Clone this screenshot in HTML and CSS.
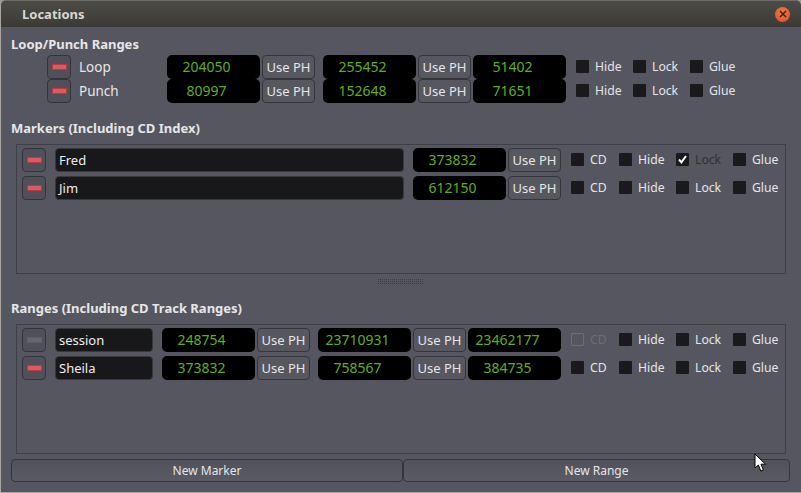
FILE: index.html
```html
<!DOCTYPE html>
<html lang="en">
  <head>
    <meta charset="UTF-8" />
    <title>Locations</title>
    <link rel="stylesheet" href="styles.css">
  </head>
  <body>
    <div class="window">
      <header class="titlebar">
        <span class="title">Locations</span>
        <span class="close">
          <svg width="8" height="8" viewBox="0 0 8 8"><path d="M1 1 7 7M7 1 1 7" stroke="#4a1a0c" stroke-width="1.5" fill="none"/></svg>
        </span>
      </header>

      <main class="content">
        <h2 class="heading">Loop/Punch Ranges</h2>
        <div class="rows loop-rows">
          <div class="row">
            <button class="remove"><span class="dash"></span></button>
            <span class="row-label">Loop</span>
            <span class="clock">204050</span>
            <button class="use-ph">Use PH</button>
            <span class="clock clock-gap">255452</span>
            <button class="use-ph">Use PH</button>
            <span class="clock">51402</span>
            <div class="flags">
              <label class="flag"><span class="box"></span>Hide</label>
              <label class="flag"><span class="box"></span>Lock</label>
              <label class="flag"><span class="box"></span>Glue</label>
            </div>
          </div>
          <div class="row">
            <button class="remove"><span class="dash"></span></button>
            <span class="row-label">Punch</span>
            <span class="clock">80997</span>
            <button class="use-ph">Use PH</button>
            <span class="clock clock-gap">152648</span>
            <button class="use-ph">Use PH</button>
            <span class="clock">71651</span>
            <div class="flags">
              <label class="flag"><span class="box"></span>Hide</label>
              <label class="flag"><span class="box"></span>Lock</label>
              <label class="flag"><span class="box"></span>Glue</label>
            </div>
          </div>
        </div>

        <h2 class="heading markers-heading">Markers (Including CD Index)</h2>
        <section class="panel">
          <div class="row">
            <button class="remove"><span class="dash"></span></button>
            <span class="name name-wide">Fred</span>
            <span class="clock">373832</span>
            <button class="use-ph">Use PH</button>
            <div class="flags">
              <label class="flag flag-cd"><span class="box"></span>CD</label>
              <label class="flag"><span class="box"></span>Hide</label>
              <label class="flag flag-on">
                <span class="box">
                  <svg width="13" height="13" viewBox="0 0 13 13"><path d="M3 6.5 5.4 9.4 10 3" stroke="#fff" stroke-width="2" fill="none"/></svg>
                </span>Lock
              </label>
              <label class="flag"><span class="box"></span>Glue</label>
            </div>
          </div>
          <div class="row">
            <button class="remove"><span class="dash"></span></button>
            <span class="name name-wide">Jim</span>
            <span class="clock">612150</span>
            <button class="use-ph">Use PH</button>
            <div class="flags">
              <label class="flag flag-cd"><span class="box"></span>CD</label>
              <label class="flag"><span class="box"></span>Hide</label>
              <label class="flag"><span class="box"></span>Lock</label>
              <label class="flag"><span class="box"></span>Glue</label>
            </div>
          </div>
        </section>

        <div class="handle"></div>

        <h2 class="heading ranges-heading">Ranges (Including CD Track Ranges)</h2>
        <section class="panel">
          <div class="row">
            <button class="remove remove-off"><span class="dash"></span></button>
            <span class="name">session</span>
            <span class="clock">248754</span>
            <button class="use-ph">Use PH</button>
            <span class="clock clock-gap">23710931</span>
            <button class="use-ph">Use PH</button>
            <span class="clock">23462177</span>
            <div class="flags">
              <label class="flag flag-cd flag-off"><span class="box"></span>CD</label>
              <label class="flag"><span class="box"></span>Hide</label>
              <label class="flag"><span class="box"></span>Lock</label>
              <label class="flag"><span class="box"></span>Glue</label>
            </div>
          </div>
          <div class="row">
            <button class="remove"><span class="dash"></span></button>
            <span class="name">Sheila</span>
            <span class="clock">373832</span>
            <button class="use-ph">Use PH</button>
            <span class="clock clock-gap">758567</span>
            <button class="use-ph">Use PH</button>
            <span class="clock">384735</span>
            <div class="flags">
              <label class="flag flag-cd"><span class="box"></span>CD</label>
              <label class="flag"><span class="box"></span>Hide</label>
              <label class="flag"><span class="box"></span>Lock</label>
              <label class="flag"><span class="box"></span>Glue</label>
            </div>
          </div>
        </section>

        <div class="actions">
          <button class="action action-marker">New Marker</button>
          <button class="action action-range">New Range</button>
        </div>
      </main>

      <svg class="cursor" width="13" height="20" viewBox="0 0 13 20">
        <path d="M1 1V15L4.4 12 6.8 18 9.4 17 7 11.2H11.5Z" fill="#fff" stroke="#000" stroke-width="1"/>
      </svg>
    </div>
  </body>
</html>
```

FILE: styles.css
```css
* {
  margin: 0;
  padding: 0;
  box-sizing: border-box;
  font-family: "Noto Sans", sans-serif;
}

html,
body {
  width: 801px;
  height: 493px;
  overflow: hidden;
  background: #9a9892;
}

.window {
  position: relative;
  width: 801px;
  height: 493px;
  background: #55565f;
  border-left: 1px solid #a9a7a0;
  border-bottom: 1px solid #a9a7a0;
  border-radius: 6px 6px 0 0;
  color: #e6e6e8;
  font-size: 13.5px;
  overflow: hidden;
}

/* Title bar */
.titlebar {
  height: 27px;
  display: flex;
  align-items: center;
  justify-content: space-between;
  padding: 0 11px 0 21px;
  background: linear-gradient(#4c4b45, #3b3a35);
  border-top: 1px solid #6d6c66;
}

.title {
  font-size: 13px;
  font-weight: 700;
  color: #d8d6d0;
}

.close {
  width: 15px;
  height: 15px;
  display: flex;
  align-items: center;
  justify-content: center;
  border-radius: 50%;
  background: radial-gradient(circle at 50% 35%, #f27a4a, #dd4d1f);
}

/* Main area */
.content {
  padding: 0 10px;
}

.heading {
  height: 17px;
  font-size: 13px;
  line-height: 15px;
  font-weight: 700;
  color: #e6e6e8;
  white-space: nowrap;
}

.content > .heading:first-child {
  margin-top: 10px;
}

.rows {
  margin-top: 1px;
}

.loop-rows {
  padding-left: 36px;
}

.markers-heading {
  margin-top: 18px;
}

.ranges-heading {
  margin-top: 17px;
}

.panel {
  height: 130px;
  width: 770px;
  margin: 6px 0 0 5px;
  padding: 3px 5px;
  border: 1px solid #3e3f47;
}

.row {
  display: flex;
  align-items: center;
  height: 24px;
  white-space: nowrap;
}

.panel .row {
  margin-bottom: 4px;
}

.remove {
  flex: none;
  width: 24px;
  height: 24px;
  display: flex;
  align-items: center;
  justify-content: center;
  background: #4f5059;
  border: 1px solid #33343a;
  border-radius: 4px;
}

.dash {
  width: 15px;
  height: 6px;
  background: #d95c5f;
  border: 1px solid #b8393e;
}

.remove-off .dash {
  background: #65666d;
  border-color: #5d5e65;
}

.row-label {
  flex: none;
  width: 96px;
  padding-left: 8px;
}

.name {
  flex: none;
  width: 98px;
  height: 24px;
  margin: 0 9px;
  padding-left: 3px;
  line-height: 22px;
  font-size: 13px;
  color: #eee;
  background: #18181a;
  border: 1px solid #38393f;
  border-radius: 4px;
}

.name-wide {
  width: 349px;
}

.clock {
  flex: none;
  width: 93px;
  height: 24px;
  padding-right: 14px;
  text-align: center;
  line-height: 23px;
  font-size: 14px;
  color: #62ad1e;
  background: #000;
  border-radius: 5px;
}

.use-ph {
  flex: none;
  width: 53px;
  height: 24px;
  margin-left: 2px;
  font-size: 13px;
  color: #e6e6e8;
  background: #56575f;
  border: 1px solid #35363c;
  border-radius: 4px;
}

.use-ph + .clock {
  margin-left: 2px;
}

.use-ph + .clock-gap {
  margin-left: 8px;
}

/* Check boxes */
.flags {
  display: flex;
  margin: 0 0 1px 10px;
}

.flag {
  flex: none;
  display: flex;
  align-items: center;
  width: 57px;
  font-size: 12.2px;
}

.flag-cd {
  width: 48px;
}

.box {
  flex: none;
  width: 13px;
  height: 13px;
  margin-right: 6px;
  display: block;
  background: #1a1a1c;
  border-radius: 1px;
}

.box svg {
  display: block;
}

.flag-on {
  color: #2f3036;
}

.flag-off {
  color: #6d6e75;
}

.flag-off .box {
  background: none;
  border: 1px solid #6d6e75;
}

/* Pane handle */
.handle {
  width: 46px;
  height: 5px;
  margin: 5px 0 0 366px;
  background: conic-gradient(#3c3d44 25%, transparent 0) 0 0 / 2px 2px;
}

/* Bottom buttons */
.actions {
  display: flex;
  margin-top: 5px;
}

.action {
  height: 23px;
  font-size: 12px;
  color: #e6e6e8;
  background: linear-gradient(#50515a, #5a5b64);
  border: 1px solid #35363c;
  border-radius: 4px;
}

.action-marker {
  width: 392px;
}

.action-range {
  width: 387px;
}

.cursor {
  position: absolute;
  left: 753px;
  top: 453px;
}
```
